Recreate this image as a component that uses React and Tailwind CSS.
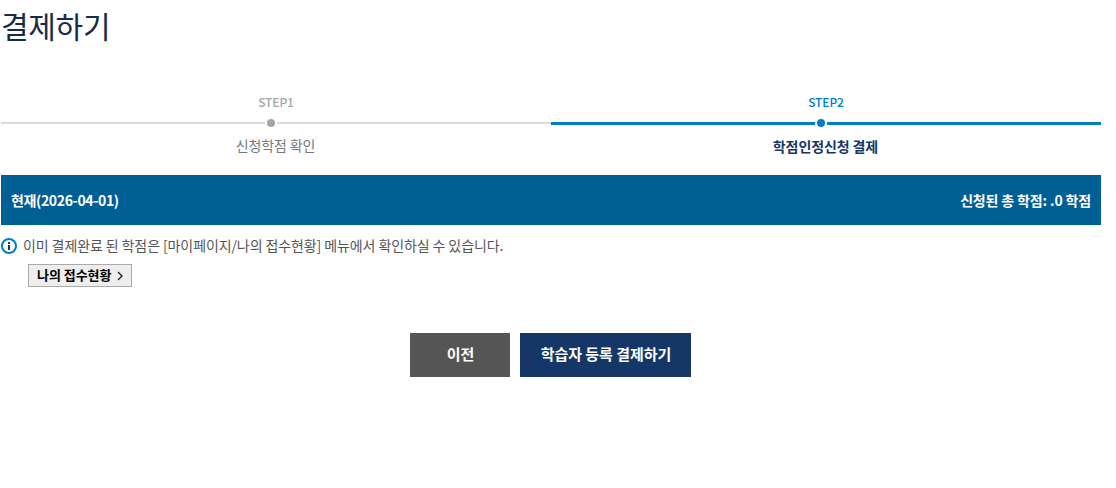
const steps = [
  { label: 'STEP1', title: '신청학점 확인', active: false },
  { label: 'STEP2', title: '학점인정신청 결제', active: true },
];

const Step = ({ label, title, active }) => (
  <li className="flex-1 flex flex-col">
    <span
      className={`h-5 text-center text-[12px] font-medium leading-5 tracking-[-0.1px] ${
        active ? 'text-[#007dc5]' : 'text-[#a5a5a5]'
      }`}
    >
      {label}
    </span>
    <div className="mt-[5px] h-3 flex items-center">
      <div className={active ? 'h-[3px] w-[264px] bg-[#007dc5]' : 'h-[2px] w-[264px] bg-[#dcdcdc]'} />
      <div className={`mx-[2px] size-2 rounded-full ${active ? 'bg-[#007dc5]' : 'bg-[#a5a5a5]'}`} />
      <div className={active ? 'h-[3px] flex-1 bg-[#007dc5]' : 'h-[2px] flex-1 bg-[#dcdcdc]'} />
    </div>
    <strong
      className={`h-5 pr-px text-center text-[14px] leading-5 tracking-[-0.1px] ${
        active ? 'mt-[7px] font-bold text-[#143768]' : 'mt-[6px] font-normal text-[#777]'
      }`}
    >
      {title}
    </strong>
  </li>
);

const InfoIcon = () => (
  <svg width="16" height="16" viewBox="0 0 16 16" fill="none">
    <circle cx="8" cy="8" r="7" stroke="#007dc5" strokeWidth="2" />
    <rect x="7" y="4" width="2" height="2" fill="#143768" />
    <rect x="7" y="7" width="2" height="5" fill="#143768" />
  </svg>
);

const ArrowIcon = () => (
  <svg width="6" height="10" viewBox="0 0 6 10" fill="none">
    <path d="M1 1l4 4-4 4" stroke="#222" strokeWidth="1.4" />
  </svg>
);

const App = () => {
  return (
    <main className="h-[488px] w-[1116px] bg-white pl-px pr-[15px] font-['Noto_Sans_CJK_KR',sans-serif]">
      <h1 className="h-[92px] pt-[3px] text-[30px] leading-[44px] tracking-[-0.3px] text-[#172b46]">결제하기</h1>

      <ol className="flex">
        {steps.map((step) => (
          <Step key={step.label} {...step} />
        ))}
      </ol>

      <div className="mt-[19px] flex h-[50px] items-center justify-between bg-[#005f94] px-[10px] text-[14px] font-bold text-white">
        <span className="tracking-[-0.36px]">현재(2026-04-01)</span>
        <span className="tracking-[-0.15px]">신청된 총 학점: .0 학점</span>
      </div>

      <p className="mt-[11px] flex h-5 items-center gap-[6px] text-[14px] leading-5 tracking-[-0.1px] text-[#555]">
        <InfoIcon />
        <span className="pb-[2px]">이미 결제완료 된 학점은 [마이페이지/나의 접수현황] 메뉴에서 확인하실 수 있습니다.</span>
      </p>
      <button className="ml-[27px] mt-2 flex h-[23px] w-[104px] items-center border border-[#aaa] bg-[#eee] pl-2 text-[13px] font-bold text-black">
        <span className="pb-[2px] tracking-[-0.05px]">나의 접수현황</span>
        <span className="ml-[6px]">
          <ArrowIcon />
        </span>
      </button>

      <div className="mt-[46px] flex justify-center gap-[10px] pr-px text-[15px] font-bold text-white">
        <button className="h-11 w-[100px] bg-[#555] pb-[2px] pl-px">이전</button>
        <button className="h-11 w-[171px] bg-[#143768] pb-[2px] pl-px tracking-[-0.05px]">학습자 등록 결제하기</button>
      </div>
    </main>
  );
};

export default App;
